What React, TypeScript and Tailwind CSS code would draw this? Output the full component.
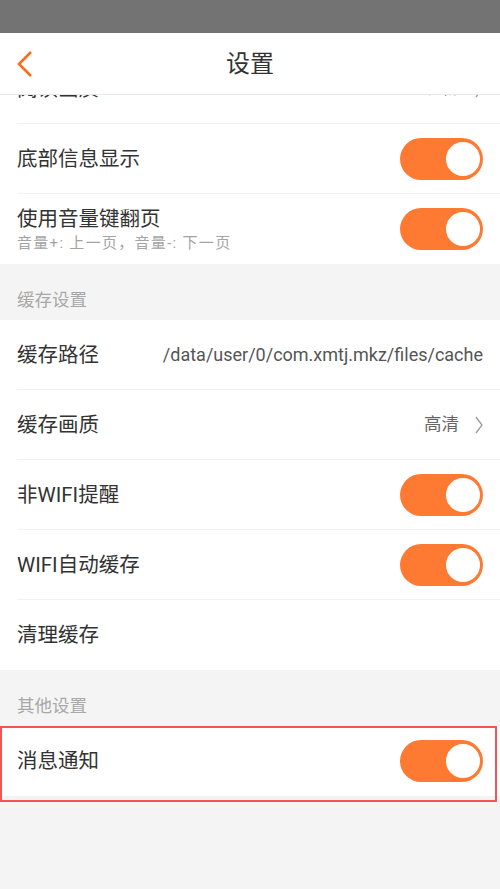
import React from 'react';

const FONT = { fontFamily: 'Roboto, "Noto Sans CJK SC", sans-serif' };

const Toggle: React.FC = () => (
  <div className="relative h-[42px] w-[83px] rounded-full bg-[#fe7a32]">
    <div className="absolute right-[1px] top-[2px] h-[38px] w-[38px] rounded-full border-2 border-[#fe7a32] bg-white" />
  </div>
);

const Chevron: React.FC = () => (
  <svg width="8" height="18" viewBox="0 0 8 18" className="ml-[16px]">
    <path d="M1 1 L7 9 L1 17" fill="none" stroke="#9a9a9a" strokeWidth="1.3" />
  </svg>
);

type RowProps = {
  title: string;
  sub?: string;
  right?: React.ReactNode;
  divider?: boolean;
};

const Row: React.FC<RowProps> = ({ title, sub, right, divider = true }) => (
  <div className="bg-white pl-[17px]">
    <div
      className={`flex h-[70px] items-center justify-between pr-[17px] ${
        divider ? 'border-b border-[#f1f1f1]' : ''
      }`}
    >
      <div className="flex flex-col">
        <span className="text-[20.5px] leading-[26px] text-[#333]">{title}</span>
        {sub && (
          <span className="mt-[2px] text-[15px] leading-[18px] tracking-[1.3px] text-[#a4a4a4]">{sub}</span>
        )}
      </div>
      {right}
    </div>
  </div>
);

const Section: React.FC<{ label: string }> = ({ label }) => (
  <div className="flex h-[56px] items-end bg-[#f4f4f4] pb-[9px] pl-[17px] text-[17.5px] leading-[22px] text-[#a8a8a8]">
    {label}
  </div>
);

const Value: React.FC<{ text: string }> = ({ text }) => (
  <div className="flex items-center text-[17.5px] text-[#666]">
    <span>{text}</span>
    <Chevron />
  </div>
);

export default function App() {
  return (
    <div className="flex h-[889px] w-[500px] flex-col overflow-hidden bg-[#f4f4f4]" style={FONT}>
      <div className="h-[33px] shrink-0 bg-[#737373]" />
      <div className="relative z-10 flex h-[62px] shrink-0 items-center justify-center border-b border-[#e8e8e8] bg-white">
        <svg width="20" height="30" viewBox="0 0 20 30" className="absolute left-[16px] top-[17px]">
          <path d="M15 2 L3 14 L15 26" fill="none" stroke="#fe6a1c" strokeWidth="2.6" />
        </svg>
        <span className="text-[24px] text-[#333]">设置</span>
      </div>

      <div className="flex-1 overflow-hidden">
        <div className="-mt-[41px]">
          <Row title="阅读画质" right={<Value text="流畅" />} />
          <Row title="底部信息显示" right={<Toggle />} />
          <Row title="使用音量键翻页" sub="音量+: 上一页，音量-: 下一页" right={<Toggle />} divider={false} />

          <Section label="缓存设置" />
          <Row
            title="缓存路径"
            right={<span className="text-[18px] text-[#555]">/data/user/0/com.xmtj.mkz/files/cache</span>}
          />
          <Row title="缓存画质" right={<Value text="高清" />} />
          <Row title="非WIFI提醒" right={<Toggle />} />
          <Row title="WIFI自动缓存" right={<Toggle />} />
          <Row title="清理缓存" divider={false} />

          <Section label="其他设置" />
          <div className="relative pb-[6px]">
            <Row title="消息通知" right={<Toggle />} divider={false} />
            <div className="pointer-events-none absolute bottom-0 left-0 right-[3px] top-0 border-2 border-[#f55454]" />
          </div>
        </div>
      </div>
    </div>
  );
}
